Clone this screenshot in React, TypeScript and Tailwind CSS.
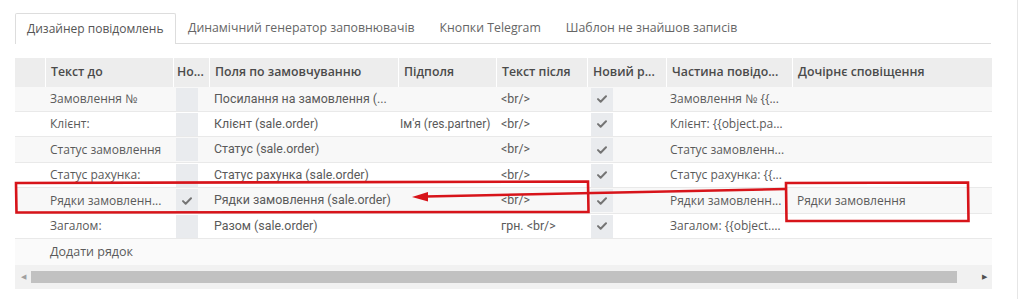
import React from "react";

const COLS = [30, 128, 36, 189, 98, 91, 79, 126, 201];

const HEADERS = [
  "",
  "Текст до",
  "Но...",
  "Поля по замовчуванню",
  "Підполя",
  "Текст після",
  "Новий р...",
  "Частина повідо...",
  "Дочірнє сповіщення",
];

type Row = {
  before: string;
  flag: boolean;
  field: string;
  sub: string;
  after: string;
  part: string;
  child: string;
  h: string;
};

const ROWS: Row[] = [
  { before: "Замовлення №", flag: false, field: "Посилання на замовлення (...", sub: "", after: "<br/>", part: "Замовлення № {{...", child: "", h: "h-[25px]" },
  { before: "Клієнт:", flag: false, field: "Клієнт (sale.order)", sub: "Ім'я (res.partner)", after: "<br/>", part: "Клієнт: {{object.par...", child: "", h: "h-[25px]" },
  { before: "Статус замовлення", flag: false, field: "Статус (sale.order)", sub: "", after: "<br/>", part: "Статус замовленн...", child: "", h: "h-[26px]" },
  { before: "Статус рахунка:", flag: false, field: "Статус рахунка (sale.order)", sub: "", after: "<br/>", part: "Статус рахунка: {{...", child: "", h: "h-[25px]" },
  { before: "Рядки замовленн...", flag: true, field: "Рядки замовлення (sale.order)", sub: "", after: "<br/>", part: "Рядки замовленн...", child: "Рядки замовлення", h: "h-[26px]" },
  { before: "Загалом:", flag: false, field: "Разом (sale.order)", sub: "", after: "грн. <br/>", part: "Загалом: {{object.a...", child: "", h: "h-[25px]" },
];

function Check() {
  return (
    <svg width="10" height="8" viewBox="0 0 11 9">
      <path d="M1 4.6 L4 7.6 L10 1.4" fill="none" stroke="#747474" strokeWidth="2.2" strokeLinecap="round" strokeLinejoin="round" />
    </svg>
  );
}

function Box({ checked }: { checked: boolean }) {
  return (
    <div className="w-[22px] h-[23px] bg-[#e9ebee] flex items-center justify-center">
      {checked && <Check />}
    </div>
  );
}

function Cell({ w, children, className = "" }: { w: number; children?: React.ReactNode; className?: string }) {
  return (
    <div style={{ width: w }} className={`shrink-0 px-[5px] truncate ${className}`}>
      {children}
    </div>
  );
}

export default function App() {
  return (
    <div className="relative w-[1024px] h-[299px] bg-white overflow-hidden font-['Open_Sans',sans-serif]">
      <div className="flex h-full">
        <div className="w-[1018px] border-r border-[#e6e6e6] pl-[15px] pr-[26px] pt-[13px]">
          {/* tabs */}
          <div className="flex border-b border-[#dddddd] text-[12.3px] text-[#666] h-[31px]">
            <div className="h-[31px] -mb-px px-[11px] flex items-center border border-b-0 border-[#dddddd] bg-white text-[#555] text-[12px] rounded-t-[2px]">
              Дизайнер повідомлень
            </div>
            <div className="px-[12.5px] flex items-center">Динамічний генератор заповнювачів</div>
            <div className="px-[12.5px] flex items-center">Кнопки Telegram</div>
            <div className="px-[12.5px] flex items-center">Шаблон не знайшов записів</div>
          </div>

          {/* table */}
          <div className="mt-[14px] w-[977px]">
            <div className="flex h-[29px] items-center bg-[#ededed] text-[12.3px] font-semibold text-[#4a4a4a]">
              {HEADERS.map((h, i) => (
                <Cell key={i} w={COLS[i]} className={`h-full flex items-center ${i > 0 ? "border-l border-white" : ""} ${i === 2 ? "!pl-[3px]" : ""}`}>
                  {h}
                </Cell>
              ))}
            </div>

            {ROWS.map((r, i) => (
              <div
                key={i}
                className={`flex items-center border-b border-[#e9e9e9] text-[12.4px] text-[#5a5a5a] font-['Roboto',sans-serif] ${r.h} ${i % 2 === 0 ? "bg-[#f8f8f8]" : "bg-white"}`}
              >
                <Cell w={COLS[0]} />
                <Cell w={COLS[1]} className="font-['Open_Sans',sans-serif] text-[12px]">{r.before}</Cell>
                <div style={{ width: COLS[2] }} className="shrink-0 pl-[3px] h-full flex items-center">
                  <Box checked={r.flag} />
                </div>
                <Cell w={COLS[3]}>{r.field}</Cell>
                <div style={{ width: COLS[4] }} className="shrink-0 pl-[2px] whitespace-nowrap text-[12px]">
                  {r.sub}
                </div>
                <Cell w={COLS[5]}>{r.after}</Cell>
                <div style={{ width: COLS[6] }} className="shrink-0 pl-[4px] h-full flex items-center">
                  <Box checked />
                </div>
                <Cell w={COLS[7]} className="!pl-[4px] font-['Open_Sans',sans-serif] text-[12px]">{r.part}</Cell>
                <Cell w={COLS[8]} className="font-['Open_Sans',sans-serif] text-[12px]">{r.child}</Cell>
              </div>
            ))}

            <div className="flex items-center h-[26px] bg-[#fafafa] text-[12.5px] text-[#5a5a5a]">
              <Cell w={COLS[0]} />
              <Cell w={COLS[1]}>Додати рядок</Cell>
            </div>

            {/* horizontal scrollbar */}
            <div className="flex items-center h-[24px] bg-[#f1f1f1]">
              <div className="w-[16px] flex justify-center text-[7px] text-[#a0a0a0]">◀</div>
              <div className="w-[926px] h-[12px] bg-[#c1c1c1]" />
              <div className="flex-1 flex justify-end pr-[5px] text-[7px] text-[#505050]">▶</div>
            </div>
          </div>
        </div>
      </div>

      {/* red annotation */}
      <svg className="absolute inset-0 pointer-events-none" width="1024" height="299" viewBox="0 0 1024 299">
        <g fill="none" stroke="#d7141a" strokeWidth="2.6">
          <path d="M16 183 L588 181.5 L588.5 212 L16.5 212.5 Z" />
          <path d="M786 183 L968 182.5 L968.5 221 L786.5 221 Z" />
          <path d="M786 189 L425 196.5" />
        </g>
        <path d="M412 197 L428 192 L428 201.5 Z" fill="#d7141a" />
      </svg>
    </div>
  );
}
